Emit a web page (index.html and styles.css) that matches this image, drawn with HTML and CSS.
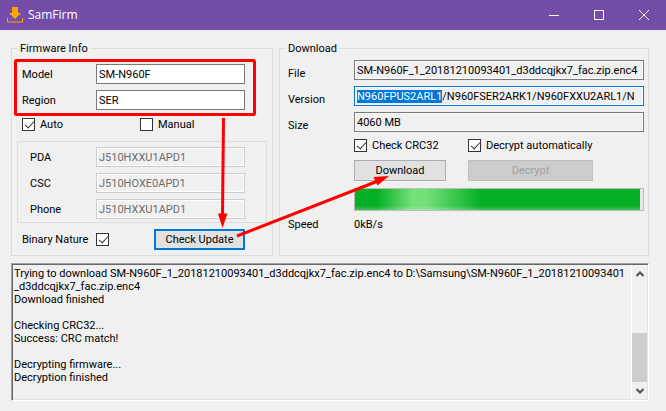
FILE: index.html
```html
<!DOCTYPE html>
<html lang="en">
<head>
  <meta charset="utf-8" />
  <title>SamFirm</title>
  <link rel="stylesheet" href="styles.css">
</head>

<body>
  <!-- Title bar -->
  <header class="title-bar">
    <svg class="app-icon" width="16" height="16" viewBox="0 0 16 16">
      <path d="M5 0h6v6h3l-6 6-6-6h3z" fill="#ffa500" />
      <path d="M.5 11v4h15v-4" fill="none" stroke="#ffa500" />
    </svg>
    <h1>SamFirm</h1>
    <div class="window-buttons">
      <button type="button" aria-label="Minimize">
        <svg width="10" height="10" viewBox="0 0 10 10"><path d="M0 5.5h10" /></svg>
      </button>
      <button type="button" aria-label="Maximize">
        <svg width="10" height="10" viewBox="0 0 10 10"><path d="M.5 .5h9v9h-9z" /></svg>
      </button>
      <button type="button" aria-label="Close">
        <svg width="10" height="10" viewBox="0 0 10 10"><path d="M0 0l10 10M10 0L0 10" /></svg>
      </button>
    </div>
  </header>

  <main>
    <div class="groups">
      <!-- Firmware Info -->
      <fieldset class="group firmware">
        <legend>Firmware Info</legend>
        <div class="row">
          <label for="model">Model</label>
          <input type="text" id="model" value="SM-N960F">
        </div>
        <div class="row">
          <label for="region">Region</label>
          <input type="text" id="region" value="SER">
        </div>
        <div class="checks">
          <label class="check"><input type="checkbox" checked>Auto</label>
          <label class="check"><input type="checkbox">Manual</label>
        </div>
        <div class="manual-box">
          <div class="row">
            <label for="pda">PDA</label>
            <input type="text" id="pda" value="J510HXXU1APD1" disabled>
          </div>
          <div class="row">
            <label for="csc">CSC</label>
            <input type="text" id="csc" value="J510HOXE0APD1" disabled>
          </div>
          <div class="row">
            <label for="phone">Phone</label>
            <input type="text" id="phone" value="J510HXXU1APD1" disabled>
          </div>
        </div>
        <div class="row binary">
          <label for="binary">Binary Nature</label>
          <input type="checkbox" id="binary" checked>
          <button type="button" class="btn default">Check Update</button>
        </div>
      </fieldset>

      <!-- Download -->
      <fieldset class="group download">
        <legend>Download</legend>
        <div class="row">
          <label for="file">File</label>
          <input type="text" id="file" value="SM-N960F_1_20181210093401_d3ddcqjkx7_fac.zip.enc4" readonly>
        </div>
        <div class="row">
          <label for="version">Version</label>
          <input type="text" id="version" value="N960FPUS2ARL1/N960FSER2ARK1/N960FXXU2ARL1/N" readonly>
        </div>
        <div class="row">
          <label for="size">Size</label>
          <input type="text" id="size" value="4060 MB" readonly>
        </div>
        <div class="actions">
          <label class="check"><input type="checkbox" checked>Check CRC32</label>
          <label class="check"><input type="checkbox" checked>Decrypt automatically</label>
          <button type="button" class="btn">Download</button>
          <button type="button" class="btn" disabled>Decrypt</button>
        </div>
        <div class="progress"><div class="bar" style="width: 99%"></div></div>
        <div class="speed"><span>Speed</span><span>0kB/s</span></div>
      </fieldset>
    </div>

    <!-- Log -->
    <div class="log">
      <textarea readonly aria-label="Log">Trying to download SM-N960F_1_20181210093401_d3ddcqjkx7_fac.zip.enc4 to D:\Samsung\SM-N960F_1_20181210093401
_d3ddcqjkx7_fac.zip.enc4
Download finished

Checking CRC32...
Success: CRC match!

Decrypting firmware...
Decryption finished</textarea>
      <div class="scrollbar">
        <button type="button" aria-label="Scroll up">
          <svg width="8" height="6" viewBox="0 0 8 6"><path d="M.5 5L4 1.5 7.500 5" /></svg>
        </button>
        <div class="track"><div class="thumb"></div></div>
        <button type="button" aria-label="Scroll down">
          <svg width="8" height="6" viewBox="0 0 8 6"><path d="M.5 1L4 4.500 7.500 1" /></svg>
        </button>
      </div>
    </div>
  </main>

  <!-- Guide marks over the window -->
  <svg class="marks" width="666" height="411" viewBox="0 0 666 411">
    <rect x="15.500" y="60.500" width="239" height="54" rx="1" />
    <path d="M223.500 118L222.500 216M237 236L378 181" />
    <path class="head" d="M218 213.500h9.500l-5 14.500zM389 176l-15.500 1 4 8.500z" />
  </svg>

  <script>
    const version = document.getElementById('version');
    version.focus();
    version.setSelectionRange(0, 13);
  </script>
</body>
</html>
```
FILE: styles.css
```css
* {
  margin: 0;
  padding: 0;
  box-sizing: border-box;
}

body {
  position: relative;
  min-height: 100vh;
  background: #f0f0f0;
  color: #000;
  font: 11px/13px Roboto, sans-serif;
}

button,
input,
textarea {
  font: inherit;
  color: inherit;
}

/* Title bar */
.title-bar {
  display: flex;
  align-items: center;
  height: 30px;
  padding-left: 7px;
  background: #744da9;
  color: #fff;
}
.title-bar h1 {
  margin-left: 5px;
  font: 12px/16px "Open Sans", sans-serif;
}
.window-buttons {
  display: flex;
  margin-left: auto;
}
.window-buttons button {
  display: flex;
  align-items: center;
  justify-content: center;
  width: 45px;
  height: 28px;
  border: 0;
  background: none;
}
.window-buttons path {
  fill: none;
  stroke: #fff;
}

main {
  padding: 12px 17px 10px 11px;
}

/* Group boxes */
.groups {
  display: grid;
  grid-template-columns: 262px 1fr;
  gap: 6px;
}
.group {
  min-width: 0;
  border: 1px solid #dcdcdc;
}
.group legend {
  padding: 0 2px;
}
.row {
  display: grid;
  grid-template-columns: 74px 1fr;
  align-items: center;
  margin-bottom: 6px;
}
input[type="text"] {
  width: 100%;
  min-width: 0;
  height: 20px;
  padding: 0 2px;
  border: 1px solid #7a7a7a;
  background: #fff;
  outline: none;
}
input[type="text"]:read-only {
  background: #f0f0f0;
  box-shadow: inset 0 0 0 1px #fff;
}
input[type="text"]:disabled {
  border-color: #ccc;
  color: #6d6d6d;
}
input[type="text"]:focus {
  border-color: #0078d7;
}
::selection {
  background: #0078d7;
  color: #fff;
}

/* Tick boxes */
.check {
  display: flex;
  align-items: center;
  gap: 5px;
  white-space: nowrap;
}
input[type="checkbox"] {
  appearance: none;
  position: relative;
  flex: none;
  width: 13px;
  height: 13px;
  border: 1px solid #333;
  background: #fff;
}
input[type="checkbox"]:checked::after {
  content: "";
  position: absolute;
  left: 4px;
  top: 0;
  width: 4px;
  height: 8px;
  border: solid #333;
  border-width: 0 1px 1px 0;
  transform: rotate(42deg);
}

/* Buttons */
.btn {
  height: 21px;
  border: 1px solid #adadad;
  background: #e1e1e1;
}
.btn.default {
  border: 2px solid #0078d7;
}
.btn:disabled {
  border-color: #bfbfbf;
  background: #ccc;
  color: #a0a0a0;
}

/* Firmware Info */
.firmware {
  padding: 9px 5px 5px;
}
.firmware legend {
  margin-left: 1px;
}
.firmware > .row {
  padding: 0 22px 0 5px;
}
.checks {
  display: grid;
  grid-template-columns: 118px 1fr;
  margin-top: 8px;
  padding-left: 5px;
}
.manual-box {
  margin: 10px 0 6px;
  padding: 5px 21px 3px 12px;
  border: 1px solid #dcdcdc;
}
.manual-box .row {
  grid-template-columns: 66px 1fr;
}
.manual-box .row:last-child {
  margin-bottom: 0;
}
.firmware .binary {
  grid-template-columns: 74px 1fr 91px;
  margin-bottom: 0;
}

/* Download */
.download {
  padding: 5px 4px 4px 8px;
}
.download legend {
  margin-left: -2px;
}
.download .row {
  grid-template-columns: 66px 1fr;
}
.download .row label {
  padding-top: 6px;
}
.actions {
  display: grid;
  grid-template-columns: 92px 125px;
  gap: 8px 22px;
  margin: 7px 0 7px 66px;
}
.progress {
  height: 23px;
  margin-left: 66px;
  border: 1px solid #bcbcbc;
  background: #e6e6e6;
}
.bar {
  height: 100%;
  background:
    linear-gradient(to top, rgba(255, 255, 255, 0.25), transparent 4px),
    linear-gradient(90deg, #06b025 8%, #74e07a 20%, #74e07a 25%, #06b025 44%);
}
.speed {
  display: grid;
  grid-template-columns: 66px 1fr;
  margin-top: 7px;
}

/* Log */
.log {
  display: flex;
  height: 138px;
  margin-top: 7px;
  padding: 1px;
  border: 1px solid;
  border-color: #a0a0a0 #fff #fff #a0a0a0;
  box-shadow: inset 1px 1px #696969, inset -1px -1px #e3e3e3;
}
.log textarea {
  flex: 1;
  min-width: 0;
  padding: 2px 1px;
  border: 0;
  background: none;
  outline: none;
  resize: none;
  overflow: hidden;
  white-space: pre-wrap;
}
.scrollbar {
  display: flex;
  flex-direction: column;
  width: 16px;
  border-left: 1px solid #fff;
}
.scrollbar button {
  display: flex;
  align-items: center;
  justify-content: center;
  height: 17px;
  border: 0;
  background: none;
}
.scrollbar path {
  fill: none;
  stroke: #505050;
  stroke-width: 2;
}
.track {
  display: flex;
  flex: 1;
  flex-direction: column;
  justify-content: flex-end;
}
.thumb {
  height: 49%;
  background: #cdcdcd;
}

/* Guide marks */
.marks {
  position: absolute;
  left: 0;
  top: 0;
  pointer-events: none;
  fill: none;
  stroke: #f00;
  stroke-width: 3;
}
.marks .head {
  fill: #f00;
  stroke: none;
}
```
